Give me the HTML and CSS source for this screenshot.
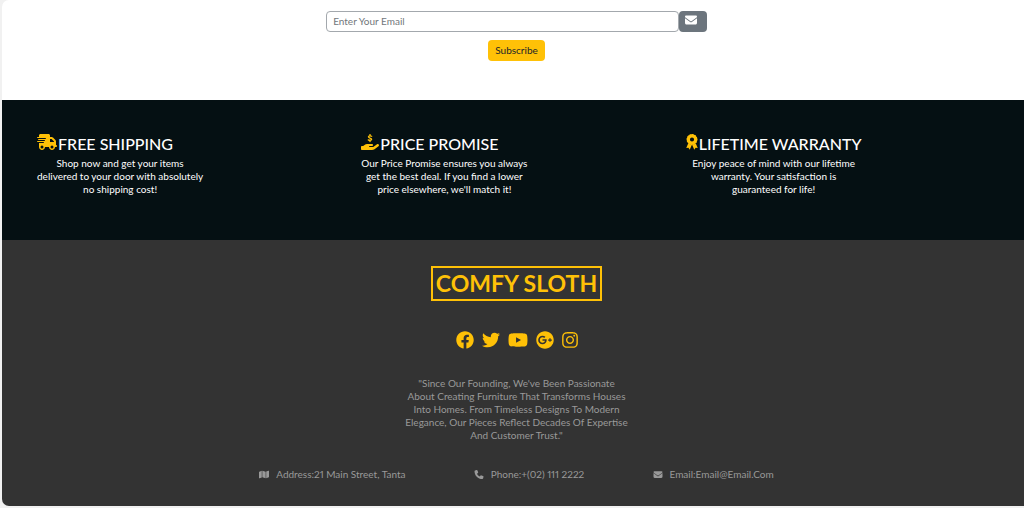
FILE: index.html
```html
<!DOCTYPE html>
<html lang="en">
<head>
    <meta charset="utf-8">
    <meta name="viewport" content="width=device-width, initial-scale=1.0">
    <title>Comfy Sloth</title>
    <link rel="stylesheet" href="styles.css">
</head>

<body>
    <!-- icons used more than once -->
    <svg class="sprite" aria-hidden="true">
        <symbol id="envelope" viewBox="0 0 512 512">
            <path d="M48 64C21.500 64 0 85.500 0 112c0 15.100 7.100 29.300 19.200 38.400L236.800 313.600c11.400 8.500 27 8.500 38.400 0L492.800 150.400c12.100-9.100 19.200-23.300 19.200-38.400c0-26.500-21.500-48-48-48H48zM0 176V384c0 35.300 28.700 64 64 64H448c35.300 0 64-28.700 64-64V176L294.400 339.200c-22.800 17.100-54 17.100-76.800 0L0 176z" />
        </symbol>
    </svg>

    <div class="page">
        <form class="newsletter">
            <div class="input-group">
                <input type="email" class="email-input" placeholder="Enter Your Email" aria-label="Enter Your Email">
                <button type="button" class="email-button" aria-label="Email">
                    <svg class="icon"><use href="#envelope" /></svg>
                </button>
            </div>
            <button type="submit" class="subscribe">Subscribe</button>
        </form>

        <section class="services">
            <div class="service">
                <div class="service-box">
                    <h2>
                        <svg class="icon truck" viewBox="0 0 640 512"><path d="M112 0C85.500 0 64 21.500 64 48V96H16c-8.800 0-16 7.200-16 16s7.200 16 16 16H64 272c8.800 0 16 7.200 16 16s-7.200 16-16 16H64 48c-8.800 0-16 7.200-16 16s7.200 16 16 16H64 240c8.800 0 16 7.200 16 16s-7.200 16-16 16H64 16c-8.800 0-16 7.200-16 16s7.200 16 16 16H64 208c8.800 0 16 7.200 16 16s-7.200 16-16 16H64V416c0 53 43 96 96 96s96-43 96-96H384c0 53 43 96 96 96s96-43 96-96h32c17.700 0 32-14.300 32-32s-14.300-32-32-32V288 256 237.300c0-17-6.700-33.300-18.700-45.300L512 114.700c-12-12-28.300-18.700-45.300-18.700H416V48c0-26.500-21.500-48-48-48H112zM544 237.300V256H416V160h50.700L544 237.300zM160 368a48 48 0 1 1 0 96 48 48 0 1 1 0-96zm272 48a48 48 0 1 1 96 0 48 48 0 1 1 -96 0z" /></svg>
                        FREE SHIPPING
                    </h2>
                    <p>Shop now and get your items<br>delivered to your door with absolutely<br>no shipping cost!</p>
                </div>
            </div>
            <div class="service">
                <div class="service-box">
                    <h2>
                        <svg class="icon hand" viewBox="0 0 576 512">
                            <path d="M568.200 336.300c13.100 17.800 9.300 42.800-8.500 55.900L433.100 485.500c-23.400 17.200-51.600 26.500-80.700 26.500H192 32c-17.700 0-32-14.300-32-32V416c0-17.700 14.300-32 32-32H68.800l44.900-36c22.700-18.200 50.900-28 80-28H272h16 64c17.700 0 32 14.300 32 32s-14.300 32-32 32H288 272c-8.800 0-16 7.200-16 16s7.200 16 16 16H392.600l119.700-88.200c17.800-13.100 42.800-9.300 55.900 8.500z" />
                            <path class="coin" d="M288 20V52M288 208V240M340 72C314 58 244 46 238 88C234 136 342 122 338 172C334 212 266 206 234 188" />
                        </svg>
                        PRICE PROMISE
                    </h2>
                    <p>Our Price Promise ensures you always<br>get the best deal. If you find a lower<br>price elsewhere, we'll match it!</p>
                </div>
            </div>
            <div class="service">
                <div class="service-box">
                    <h2>
                        <svg class="icon award" viewBox="8 0 368 512">
                            <path d="M70 300L8 448L78 438L118 506L186 352ZM314 300L376 448L306 438L266 506L198 352Z" />
                            <circle class="scallops" cx="192" cy="176" r="150" />
                            <circle class="medal" cx="192" cy="176" r="116" />
                        </svg>
                        LIFETIME WARRANTY
                    </h2>
                    <p>Enjoy peace of mind with our lifetime<br>warranty. Your satisfaction is<br>guaranteed for life!</p>
                </div>
            </div>
        </section>

        <footer class="footer">
            <h1 class="logo">COMFY SLOTH</h1>

            <div class="social">
                <a href="#" aria-label="Facebook"><svg class="icon" viewBox="0 0 512 512"><path d="M504 256C504 119 393 8 256 8S8 119 8 256c0 123.780 90.690 226.380 209.250 245V327.690h-63V256h63v-54.640c0-62.150 37-96.480 93.670-96.480 27.140 0 55.520 4.840 55.520 4.840v61h-31.280c-30.800 0-40.410 19.120-40.410 38.730V256h68.780l-11 71.690h-57.780V501C413.310 482.380 504 379.780 504 256z" /></svg></a>
                <a href="#" aria-label="Twitter"><svg class="icon" viewBox="0 0 512 512"><path d="M459.370 151.716c.325 4.548.325 9.097.325 13.645 0 138.720-105.583 298.558-298.558 298.558-59.452 0-114.680-17.219-161.137-47.106 8.447.974 16.568 1.299 25.340 1.299 49.055 0 94.213-16.568 130.274-44.832-46.132-.975-84.792-31.188-98.112-72.772 6.498.974 12.995 1.624 19.818 1.624 9.421 0 18.843-1.300 27.614-3.573-48.081-9.747-84.143-51.980-84.143-102.985v-1.299c13.969 7.797 30.214 12.670 47.431 13.319-28.264-18.843-46.781-51.005-46.781-87.391 0-19.492 5.197-37.360 14.294-52.954 51.655 63.675 129.300 105.258 216.365 109.807-1.624-7.797-2.599-15.918-2.599-24.040 0-57.828 46.782-104.934 104.934-104.934 30.213 0 57.502 12.670 76.670 33.137 23.715-4.548 46.456-13.320 66.599-25.340-7.798 24.366-24.366 44.833-46.132 57.827 21.117-2.273 41.584-8.122 60.426-16.243-14.292 20.791-32.161 39.308-52.628 54.253z" /></svg></a>
                <a href="#" aria-label="YouTube"><svg class="icon youtube" viewBox="0 0 576 512"><path d="M549.655 124.083c-6.281-23.650-24.787-42.276-48.284-48.597C458.781 64 288 64 288 64S117.220 64 74.629 75.486c-23.497 6.322-42.003 24.947-48.284 48.597-11.412 42.867-11.412 132.305-11.412 132.305s0 89.438 11.412 132.305c6.281 23.650 24.787 41.500 48.284 47.821C117.220 448 288 448 288 448s170.780 0 213.371-11.486c23.497-6.321 42.003-24.171 48.284-47.821 11.412-42.867 11.412-132.305 11.412-132.305s0-89.438-11.412-132.305zm-317.510 213.508V175.185l142.739 81.205-142.739 81.201z" /></svg></a>
                <a href="#" aria-label="Google Plus"><svg class="icon" viewBox="0 0 496 512"><path d="M248 8C111.100 8 0 119.100 0 256s111.100 248 248 248 248-111.100 248-248S384.900 8 248 8zm-70.700 372c-68.800 0-124-55.500-124-124s55.200-124 124-124c31.300 0 60.100 11 83 32.300l-33.600 32.600c-13.200-12.900-31.300-19.100-49.400-19.100-42.900 0-77.200 35.500-77.200 78.100s34.200 78.100 77.200 78.100c32.600 0 64.900-19.100 70.100-53.300h-70.100v-42.600h116.900c1.300 6.800 1.900 13.600 1.900 20.700 0 70.800-47.500 121.200-118.800 121.200zm230.200-106.200v35.500H372v-35.500h-35.500v-35.500H372v-35.500h35.500v35.500h35.200v35.500h-35.200z" /></svg></a>
                <a href="#" aria-label="Instagram"><svg class="icon instagram" viewBox="0 0 448 512"><path d="M224.100 141c-63.600 0-114.900 51.300-114.900 114.900s51.300 114.900 114.900 114.900S339 319.500 339 255.900 287.700 141 224.100 141zm0 189.600c-41.100 0-74.700-33.500-74.700-74.700s33.500-74.700 74.700-74.700 74.700 33.500 74.700 74.700-33.600 74.700-74.700 74.700zm146.400-194.300c0 14.900-12 26.800-26.800 26.800-14.900 0-26.800-12-26.800-26.800s12-26.800 26.800-26.800 26.800 12 26.800 26.800zm76.100 27.200c-1.700-35.900-9.900-67.700-36.200-93.900-26.200-26.200-58-34.400-93.900-36.200-37-2.100-147.900-2.100-184.900 0-35.800 1.700-67.600 9.900-93.900 36.100s-34.400 58-36.200 93.900c-2.100 37-2.100 147.900 0 184.900 1.700 35.900 9.900 67.700 36.200 93.900s58 34.400 93.900 36.200c37 2.100 147.900 2.100 184.900 0 35.900-1.700 67.700-9.900 93.900-36.200 26.200-26.200 34.400-58 36.200-93.900 2.100-37 2.100-147.800 0-184.800zM398.800 388c-7.800 19.600-22.900 34.700-42.600 42.600-29.500 11.700-99.500 9-132.100 9s-102.700 2.600-132.100-9c-19.600-7.800-34.700-22.900-42.600-42.600-11.700-29.500-9-99.500-9-132.100s-2.600-102.700 9-132.100c7.800-19.600 22.900-34.700 42.600-42.600 29.500-11.700 99.500-9 132.100-9s102.700-2.600 132.100 9c19.600 7.800 34.700 22.900 42.600 42.600 11.700 29.500 9 99.500 9 132.100s2.700 102.700-9 132.100z" /></svg></a>
            </div>

            <p class="about">"Since Our Founding, We've Been Passionate<br>About Creating Furniture That Transforms Houses<br>Into Homes. From Timeless Designs To Modern<br>Elegance, Our Pieces Reflect Decades Of Expertise<br>And Customer Trust."</p>

            <ul class="contact">
                <li>
                    <svg class="icon" viewBox="0 0 576 512"><path d="M384 476.100L192 421.200V35.900L384 90.800V476.100zm32-1.200V88.400L543.100 37.500c15.800-6.300 32.900 5.300 32.900 22.300V394.600c0 9.800-6 18.600-15.100 22.300L416 474.800zM15.100 95.100L160 37.200V423.600L32.900 474.500C17.100 480.800 0 469.200 0 452.200V117.400c0-9.800 6-18.600 15.100-22.300z" /></svg>
                    <span>Address:21 Main Street, Tanta</span>
                </li>
                <li>
                    <svg class="icon" viewBox="0 0 512 512"><path d="M164.900 24.600c-7.700-18.600-28-28.500-47.400-23.200l-88 24C12.100 30.200 0 46 0 64C0 311.400 200.600 512 448 512c18 0 33.800-12.100 38.600-29.500l24-88c5.300-19.400-4.600-39.700-23.200-47.400l-96-40c-16.300-6.800-35.200-2.100-46.300 11.600L304.700 368C234.300 334.700 177.300 277.700 144 207.300L193.300 167c13.700-11.200 18.400-30 11.600-46.300l-40-96z" /></svg>
                    <span>Phone:+(02) 111 2222</span>
                </li>
                <li>
                    <svg class="icon"><use href="#envelope" /></svg>
                    <span>Email:Email@Email.Com</span>
                </li>
            </ul>
        </footer>
    </div>
</body>
</html>
```
FILE: styles.css
```css
* {
    box-sizing: border-box;
}

body {
    margin: 0;
    background-color: #f1f1f1;
    font-family: Lato, sans-serif;
    font-size: 10px;
    line-height: 13px;
    overflow-x: hidden;
}

h1, h2, p, ul {
    margin: 0;
    padding: 0;
}

input, button {
    font-family: inherit;
    font-size: 10px;
    line-height: 13px;
}

.sprite {
    display: none;
}

.icon {
    display: block;
    flex-shrink: 0;
    fill: currentColor;
}

/* runs a little past the right edge of the window */
.page {
    margin: 0 -7px 2px 2px;
    background-color: #ffffff;
    border-radius: 7px;
    overflow: hidden;
}

.newsletter {
    display: flex;
    flex-direction: column;
    align-items: center;
    padding: 11px 0 39px;
}

.input-group {
    display: flex;
    width: 37%;
    margin-bottom: 8px;
}

.email-input {
    flex: 1;
    min-width: 0;
    height: 21px;
    padding: 2px 6px 4px;
    border: 1px solid #a3a8ad;
    border-radius: 4px;
    color: #212529;
}

.email-input::placeholder {
    color: #72777b;
}

.email-button {
    display: flex;
    width: 28px;
    padding: 3px 6px;
    border: none;
    border-radius: 4px;
    background-color: #6c757d;
    color: #ffffff;
}

.email-button .icon {
    width: 12px;
    height: 12px;
}

.subscribe {
    height: 21px;
    padding: 3px 7px;
    border: none;
    border-radius: 4px;
    background-color: #ffc107;
    color: #212529;
}

.services {
    display: grid;
    grid-template-columns: repeat(3, 1fr);
    padding: 34px 28px 44px;
    background-color: #051013;
    color: #ffffff;
}

.service {
    padding: 0 7px;
}

.service-box {
    width: fit-content;
    text-align: center;
}

.service h2 {
    display: flex;
    gap: 1px;
    margin-bottom: 3px;
    font-size: 16px;
    font-weight: 500;
    line-height: 20px;
}

.service h2 .icon {
    color: #ffc107;
    height: 16px;
}

.truck {
    width: 20px;
}

.hand {
    width: 18px;
}

.award {
    width: 12px;
}

.coin,
.scallops,
.medal {
    fill: none;
    stroke: #ffc107;
}

.coin {
    stroke-width: 44px;
    stroke-linecap: round;
}

.medal {
    stroke-width: 100px;
}

.scallops {
    stroke-width: 50px;
    stroke-linecap: round;
    stroke-dasharray: 24 54;
}

.footer {
    display: flex;
    flex-direction: column;
    align-items: center;
    padding: 26px 0 25px;
    background-color: #333333;
    color: #999999;
}

.logo {
    padding: 2px 3px;
    border: 2px solid #ffc107;
    color: #ffc107;
    font-size: 23px;
    line-height: 27px;
}

.social {
    display: flex;
    gap: 8px;
    margin: 30px 0 28px;
}

.social a {
    color: #ffc107;
}

.social .icon {
    width: 18px;
    height: 18px;
}

.social .youtube {
    width: 20px;
}

.social .instagram {
    width: 16px;
}

.about {
    text-align: center;
}

.contact {
    display: flex;
    justify-content: space-between;
    width: 50%;
    margin-top: 26px;
    font-variant-numeric: proportional-nums;
    list-style: none;
}

.contact li {
    display: flex;
    align-items: center;
    gap: 7px;
}

.contact .icon {
    width: 10px;
    height: 9px;
}
```
